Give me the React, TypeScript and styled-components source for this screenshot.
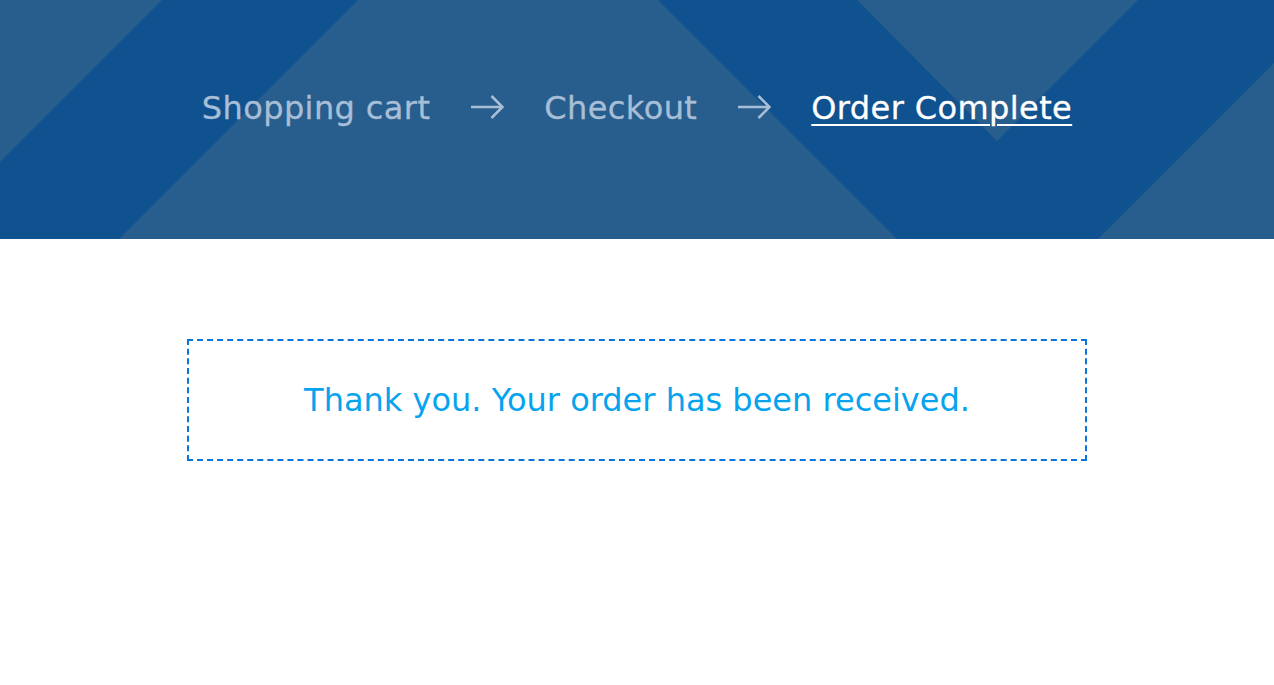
import React from "react";
import styled, { createGlobalStyle } from "styled-components";

const GlobalStyle = createGlobalStyle`
  html, body { margin: 0; padding: 0; background: #ffffff; }
  body { font-family: "DejaVu Sans", "Open Sans", sans-serif; }
  * { box-sizing: border-box; }
`;

const Page = styled.div`
  width: 100%;
  min-height: 685px;
  background: #ffffff;
`;

const Hero = styled.header`
  position: relative;
  height: 239px;
  background: #0f528f;
  overflow: hidden;
  display: flex;
  justify-content: center;
  padding-top: 84px;
`;

const Pattern = styled.svg`
  position: absolute;
  inset: 0;
  width: 100%;
  height: 100%;
`;

const Steps = styled.nav`
  position: relative;
  display: flex;
  align-items: center;
  gap: 40px;
  height: 48px;
`;

const Step = styled.a<{ $active?: boolean }>`
  font-family: "DejaVu Sans", "Open Sans", sans-serif;
  font-size: 32px;
  font-weight: 400;
  letter-spacing: 0.4px;
  line-height: 48px;
  -webkit-text-stroke: 0.3px currentColor;
  color: ${(p) => (p.$active ? "#ffffff" : "#a8bed6")};
  text-decoration: ${(p) => (p.$active ? "underline" : "none")};
  text-decoration-thickness: 2px;
  text-underline-offset: 5px;
  white-space: nowrap;
  cursor: pointer;
`;

const Arrow = styled.svg`
  width: 34px;
  height: 26px;
  display: block;
  margin-top: -2px;
`;

const Main = styled.main`
  display: flex;
  justify-content: center;
  padding-top: 100px;
`;

const Notice = styled.div`
  width: 900px;
  height: 122px;
  border: 2px dashed #0b76d9;
  display: flex;
  align-items: center;
  justify-content: center;
`;

const NoticeText = styled.p`
  margin: 0;
  font-family: "DejaVu Sans", "Open Sans", sans-serif;
  font-size: 32px;
  font-weight: 400;
  color: #06a3ee;
`;

const StepArrow = () => (
  <Arrow viewBox="0 0 34 26" aria-hidden>
    <path
      d="M1 13H32.5M21.5 2L32.5 13L21.5 24"
      fill="none"
      stroke="#a8bed6"
      strokeWidth="2.6"
      strokeLinejoin="miter"
    />
  </Arrow>
);

export default function App() {
  return (
    <Page>
      <GlobalStyle />
      <Hero>
        <Pattern viewBox="0 0 1274 239" preserveAspectRatio="none" aria-hidden>
          <g fill="#275e8d">
            <polygon points="0,0 162,0 0,162" />
            <polygon points="358,0 658,0 897,239 119,239" />
            <polygon points="857,0 1138,0 997,141" />
            <polygon points="1274,63 1274,239 1098,239" />
          </g>
        </Pattern>
        <Steps>
          <Step>Shopping cart</Step>
          <StepArrow />
          <Step>Checkout</Step>
          <StepArrow />
          <Step $active>Order Complete</Step>
        </Steps>
      </Hero>
      <Main>
        <Notice>
          <NoticeText>Thank you. Your order has been received.</NoticeText>
        </Notice>
      </Main>
    </Page>
  );
}
